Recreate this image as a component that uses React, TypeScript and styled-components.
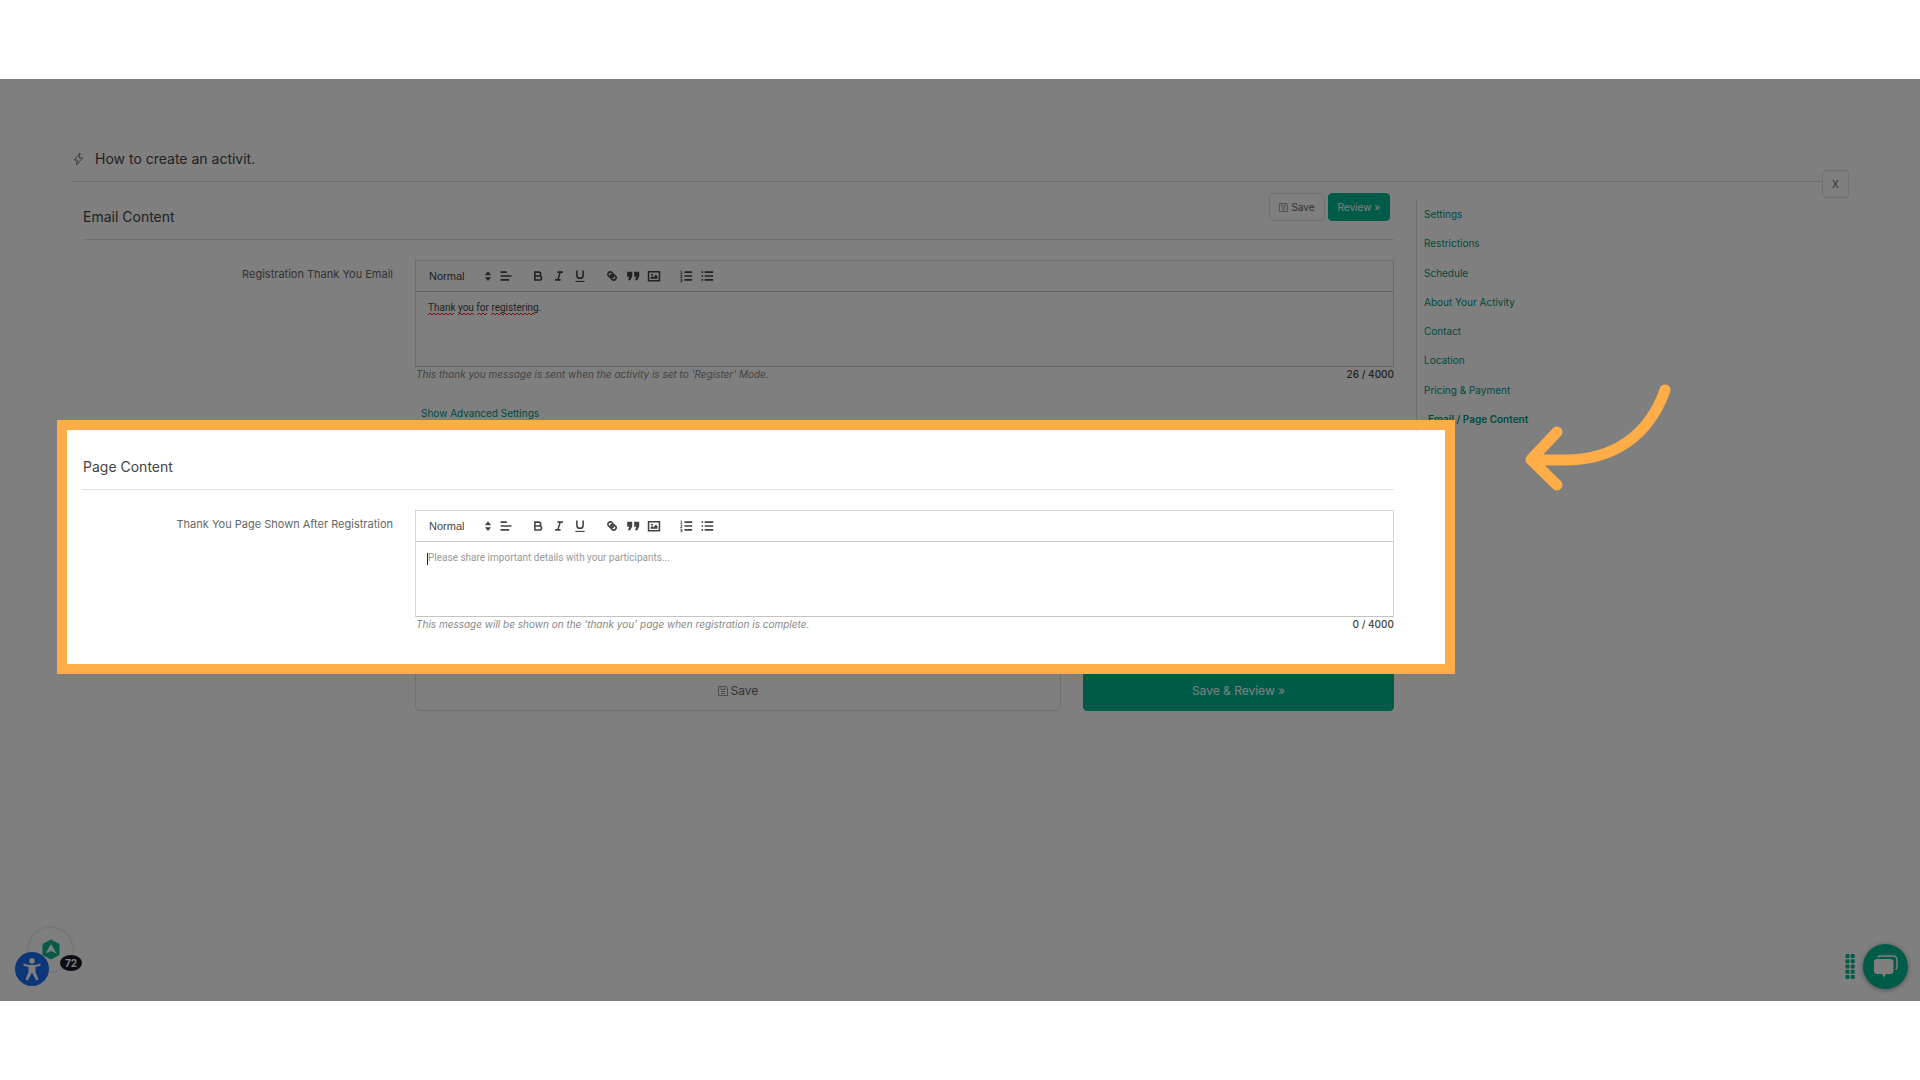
import React, { useId } from "react";
import styled, { createGlobalStyle } from "styled-components";

const green = "#00b892";
const orange = "#ffad48";
const rule = "#e2e2e2";

const GlobalStyle = createGlobalStyle`
  *, *::before, *::after { box-sizing: border-box; }
  body {
    margin: 0;
    background: #fff;
    color: #444;
    font: 11px/16px Inter, "Open Sans", sans-serif;
  }
  button, select, textarea { font: inherit; color: inherit; }
`;

const Page = styled.div`
  display: flex;
  flex-direction: column;
  min-height: 100vh;
  padding: 79px 0;
`;

const Stage = styled.div`
  position: relative;
  isolation: isolate;
  flex: 1;
  overflow: hidden;
  padding: 64px 71px;
  background: #fff;
`;

const Header = styled.header`
  display: flex;
  align-items: flex-end;
`;

const TitleBar = styled.div`
  display: flex;
  flex: 1;
  align-items: center;
  gap: 11px;
  height: 39px;
  padding: 0 0 6px 2px;
  margin-bottom: 11px;
  border-bottom: 1px solid #d8d8d8;
  color: #444;
`;

const Title = styled.h1`
  margin: 0;
  font-size: 14px;
  line-height: 20px;
  font-weight: 400;
`;

const Button = styled.button<{ $primary?: boolean; $large?: boolean }>`
  display: flex;
  align-items: center;
  justify-content: center;
  gap: 3px;
  height: ${(p) => (p.$large ? 40 : 28)}px;
  padding: 0 9px;
  border: 1px solid ${(p) => (p.$primary ? green : rule)};
  border-radius: 4px;
  background: ${(p) => (p.$primary ? green : "#fff")};
  color: ${(p) => (p.$primary ? "#fff" : "#666")};
  font-size: ${(p) => (p.$large ? 12 : 10)}px;
`;

const CloseButton = styled(Button)`
  width: 27px;
  padding: 0;
  margin-bottom: -5px;
`;

const Body = styled.div`
  display: grid;
  grid-template-columns: minmax(0, 1fr) 433px;
  gap: 22px;
  align-items: start;
  padding-left: 11px;
`;

const Section = styled.section`
  position: relative;
`;

const SectionHead = styled.div`
  display: flex;
  align-items: flex-start;
  justify-content: space-between;
  height: 47px;
  padding-right: 4px;
  border-bottom: 1px solid ${rule};
`;

const SectionTitle = styled.h2`
  margin: 0;
  padding: 14px 0 0 1px;
  font-size: 14px;
  line-height: 20px;
  font-weight: 400;
`;

const Actions = styled.div`
  display: flex;
  gap: 3px;
`;

const FieldRow = styled.div`
  display: grid;
  grid-template-columns: 311px minmax(0, 1fr);
  column-gap: 22px;
  margin-top: 20px;
`;

const FieldLabel = styled.label`
  padding-top: 6px;
  color: #666;
  text-align: right;
`;

const EditorBox = styled.div`
  border: 1px solid #d6d6d6;
  border-bottom-color: #c4c4c4;
`;

const Toolbar = styled.div`
  display: flex;
  align-items: center;
  gap: 11px;
  height: 31px;
  padding-left: 6px;
  border-bottom: 1px solid #c8c8c8;
`;

const ToolGroup = styled.div`
  display: flex;
  align-items: center;
`;

const ToolButton = styled.button`
  display: grid;
  place-items: center;
  width: 21px;
  height: 18px;
  padding: 0;
  border: 0;
  background: none;
  color: #444;
`;

const Picker = styled.div`
  display: grid;
  align-items: center;
  width: 73px;
  > * { grid-area: 1 / 1; }
  > svg { justify-self: end; pointer-events: none; }
`;

const PickerSelect = styled.select`
  appearance: none;
  padding: 0 7px;
  border: 0;
  background: none;
  font: 500 11px/16px "Liberation Sans", Arial, sans-serif;
`;

const Writing = styled.div`
  position: relative;
  height: 74px;
`;

const TextArea = styled.textarea`
  display: block;
  width: 100%;
  height: 100%;
  padding: 9px 12px;
  border: 0;
  outline: 0;
  resize: none;
  background: none;
  font: 10px/14px Roboto, Arial, sans-serif;
  color: #444;
  &::placeholder { color: #999; opacity: 1; }
`;

const Squiggles = styled.svg`
  position: absolute;
  left: 12px;
  top: 20px;
  pointer-events: none;
`;

const Caret = styled.span`
  position: absolute;
  left: 11px;
  top: 11px;
  width: 1px;
  height: 12px;
  background: #222;
`;

const Notes = styled.div`
  display: flex;
  justify-content: space-between;
  padding-left: 1px;
  font-size: 10px;
  line-height: 14px;
`;

const Hint = styled.em`
  color: #888;
`;

const Counter = styled.strong`
  font-weight: 500;
`;

const TextLink = styled.a<{ $active?: boolean }>`
  color: #00947a;
  font-size: 10px;
  font-weight: ${(p) => (p.$active ? 600 : 400)};
  padding-left: ${(p) => (p.$active ? 4 : 0)}px;
  text-decoration: none;
`;

const Advanced = styled.div`
  padding: 24px 0 22px 339px;
`;

const Spotlight = styled.div`
  position: absolute;
  z-index: 2;
  inset: -23px -61px -43px -25px;
  border: 10px solid ${orange};
  box-shadow: 0 0 0 4000px rgba(0, 0, 0, 0.5);
  pointer-events: none;
`;

const Submit = styled.div`
  display: grid;
  grid-template-columns: 27fr 13fr;
  gap: 22px;
  margin: 40px 0 0 333px;
`;

const Nav = styled.nav`
  position: relative;
  margin-top: 8px;
  border-left: 1px solid #d8d8d8;
`;

const NavList = styled.ul`
  display: flex;
  flex-direction: column;
  justify-content: space-between;
  height: 230px;
  margin: 0;
  padding: 5px 0 4px 7px;
  list-style: none;
`;

const Arrow = styled.svg`
  position: absolute;
  z-index: 3;
  left: 103px;
  top: 179px;
`;

const Badges = styled.div`
  position: absolute;
  left: 15px;
  bottom: 14px;
  width: 70px;
  height: 62px;
`;

const Launcher = styled.button`
  position: absolute;
  left: 14px;
  top: 3px;
  display: grid;
  place-items: center;
  width: 43px;
  height: 43px;
  padding: 0;
  border: 0;
  border-radius: 50%;
  background: #fff;
  box-shadow: 0 0 4px rgba(0, 0, 0, 0.2);
`;

const Access = styled.button`
  position: absolute;
  left: 0;
  bottom: 1px;
  width: 34px;
  height: 34px;
  padding: 0;
  border: 0;
  border-radius: 50%;
  background: #1a6cf0;
`;

const Count = styled.span`
  position: absolute;
  left: 45px;
  top: 30px;
  width: 22px;
  height: 16px;
  border-radius: 50%;
  background: #141b2d;
  color: #fff;
  font-size: 10px;
  font-weight: 700;
  text-align: center;
`;

const ChatDock = styled.div`
  position: absolute;
  right: 12px;
  bottom: 12px;
  display: flex;
  align-items: center;
  gap: 8px;
`;

const ChatButton = styled.button`
  display: grid;
  place-items: center;
  width: 45px;
  height: 45px;
  padding: 0;
  border: 0;
  border-radius: 50%;
  background: ${green};
  box-shadow: 0 1px 5px rgba(0, 0, 0, 0.4);
`;

const BoltIcon = () => (
  <svg width="11" height="14" viewBox="0 0 11 14" fill="none" stroke="#777" strokeWidth="1" strokeLinejoin="round" aria-hidden="true">
    <path d="M7 1 1.200 8h3.300L3.400 13l6.200-7H6.200z" />
  </svg>
);

const DiskIcon = ({ size }: { size: number }) => (
  <svg width={size} height={size} viewBox="0 0 10 10" fill="none" stroke="#999" aria-hidden="true">
    <path d="M.5.5h8l1 1v8h-9zM3 .5v3h4v-3M3 7.5h4M3 5.5h4" />
  </svg>
);

const tools: Record<string, React.ReactNode> = {
  align: <path d="M2 9h14M2 14h11M2 4h8" />,
  bold: <path d="M5 4h5a2.5 2.5 0 0 1 0 5H5zM5 9h6a2.5 2.5 0 0 1 0 5.2H5z" />,
  italic: <path d="M7 4h7M4 14h7M10.500 4l-3 10" />,
  underline: (
    <>
      <path d="M5 2v6a4 4 0 0 0 8 0V2" />
      <path d="M3 16h12" strokeWidth="1.4" />
    </>
  ),
  link: (
    <>
      <path d="m7 7 4 4" />
      <path d="M8.9 4.600A2.900 2.900 0 1 0 4.600 8.900l1.300 1.200a2.900 2.900 0 0 0 4.200-4.200zM9.100 13.400a2.900 2.900 0 1 0 4.300-4.300l-1.300-1.200a2.900 2.900 0 0 0-4.200 4.200z" />
    </>
  ),
  quote: (
    <path
      d="M1.500 3.500h6.500v6L5.500 14.500H2.500L4.200 10H1.500zM10.500 3.500H17v6l-2.500 5h-3L13.200 10h-2.700z"
      fill="currentColor"
      stroke="none"
    />
  ),
  image: (
    <>
      <path d="M2 3.500h14v11.500H2z" />
      <circle cx="6.500" cy="7.500" r="1.300" fill="currentColor" stroke="none" />
      <path d="M4.500 12.500v-1.500l2-2 2 1.500 3-3.500 2 2.500v3z" fill="currentColor" stroke="none" />
    </>
  ),
  ordered: (
    <>
      <path d="M7 4h10M7 9h10M7 14h10" />
      <path d="M2 2.500h1V6M2 6h2.500M1.800 8h2v1.500l-2 1.500h2.400M1.800 13h2v3.500h-2M2 14.700h1.800" strokeWidth="1" />
    </>
  ),
  bullet: <path d="M6 4h11M6 9h11M6 14h11M2 4h2M2 9h2M2 14h2" />,
};

const Tool = ({ name }: { name: string }) => (
  <ToolButton type="button" aria-label={name}>
    <svg width="14" height="14" viewBox="0 0 18 18" fill="none" stroke="currentColor" strokeWidth="2" aria-hidden="true">
      {tools[name]}
    </svg>
  </ToolButton>
);

const zigzag = (from: number, to: number) => {
  let d = `M${from} 3`;
  for (let x = from + 2, up = true; x <= to; x += 2, up = !up) d += `L${x} ${up ? 1 : 3}`;
  return d;
};

interface EditorProps {
  label: string;
  hint: string;
  count: string;
  text?: string;
  placeholder?: string;
}

const Editor = ({ label, hint, count, text, placeholder }: EditorProps) => {
  const id = useId();
  return (
    <FieldRow>
      <FieldLabel htmlFor={id}>{label}</FieldLabel>
      <div>
        <EditorBox>
          <Toolbar>
            <ToolGroup>
              <Picker>
                <PickerSelect aria-label="Text style">
                  <option>Normal</option>
                </PickerSelect>
                <svg width="14" height="14" viewBox="0 0 18 18" fill="#444" aria-hidden="true">
                  <path d="M5 8h8L9 3zM5 10.500h8l-4 5z" />
                </svg>
              </Picker>
              <Tool name="align" />
            </ToolGroup>
            <ToolGroup>
              <Tool name="bold" />
              <Tool name="italic" />
              <Tool name="underline" />
            </ToolGroup>
            <ToolGroup>
              <Tool name="link" />
              <Tool name="quote" />
              <Tool name="image" />
            </ToolGroup>
            <ToolGroup>
              <Tool name="ordered" />
              <Tool name="bullet" />
            </ToolGroup>
          </Toolbar>
          <Writing>
            <TextArea id={id} defaultValue={text} placeholder={placeholder} spellCheck={false} />
            {text ? (
              <Squiggles width="112" height="4" fill="none" stroke="#e22" aria-hidden="true">
                <path d={zigzag(0, 27) + zigzag(30, 46) + zigzag(49, 60) + zigzag(63, 108)} />
              </Squiggles>
            ) : (
              <Caret />
            )}
          </Writing>
        </EditorBox>
        <Notes>
          <Hint>{hint}</Hint>
          <Counter>{count}</Counter>
        </Notes>
      </div>
    </FieldRow>
  );
};

const links = [
  "Settings",
  "Restrictions",
  "Schedule",
  "About Your Activity",
  "Contact",
  "Location",
  "Pricing & Payment",
  "Email / Page Content",
];

export default function App() {
  return (
    <Page>
      <GlobalStyle />
      <Stage>
        <Header>
          <TitleBar>
            <BoltIcon />
            <Title>How to create an activit.</Title>
          </TitleBar>
          <CloseButton type="button">X</CloseButton>
        </Header>
        <Body>
          <main>
            <Section>
              <SectionHead>
                <SectionTitle>Email Content</SectionTitle>
                <Actions>
                  <Button type="button">
                    <DiskIcon size={9} />
                    Save
                  </Button>
                  <Button type="button" $primary>
                    Review »
                  </Button>
                </Actions>
              </SectionHead>
              <Editor
                label="Registration Thank You Email"
                text="Thank you for registering."
                hint="This thank you message is sent when the activity is set to 'Register' Mode."
                count="26 / 4000"
              />
              <Advanced>
                <TextLink href="#advanced">Show Advanced Settings</TextLink>
              </Advanced>
            </Section>
            <Section>
              <SectionHead>
                <SectionTitle>Page Content</SectionTitle>
              </SectionHead>
              <Editor
                label="Thank You Page Shown After Registration"
                placeholder="Please share important details with your participants..."
                hint="This message will be shown on the ‘thank you’ page when registration is complete."
                count="0 / 4000"
              />
              <Spotlight />
            </Section>
            <Submit>
              <Button type="button" $large>
                <DiskIcon size={10} />
                Save
              </Button>
              <Button type="button" $large $primary>
                Save &amp; Review »
              </Button>
            </Submit>
          </main>
          <Nav>
            <NavList>
              {links.map((name, i) => (
                <li key={name}>
                  <TextLink href={"#section-" + i} $active={i === links.length - 1}>
                    {name}
                  </TextLink>
                </li>
              ))}
            </NavList>
            <Arrow width="152" height="112" viewBox="0 0 152 112" fill="none" stroke={orange} strokeWidth="11" strokeLinecap="round" strokeLinejoin="round" aria-hidden="true">
              <path d="M145 10C129 56 93 80 45 80Q28 80 11 79.500M37 52 11 79.500 37 105" />
            </Arrow>
          </Nav>
        </Body>
        <Badges>
          <Launcher type="button" aria-label="Open tips">
            <svg width="18" height="21" viewBox="0 0 18 21" aria-hidden="true">
              <path d="M9 .5 17.500 5v11L9 20.500.5 16V5z" fill="#10b58c" />
              <path d="M9 5l5.500 9.500L9 12l-5.500 2.500z" fill="#fff" />
            </svg>
          </Launcher>
          <Access type="button" aria-label="Accessibility">
            <svg width="34" height="34" viewBox="0 0 34 34" fill="#fff" aria-hidden="true">
              <circle cx="17" cy="9" r="2.800" />
              <path d="M8.500 11.500q8.500 3 17 0v2.300L20.500 15v5l3 7.500-2.300.8L17 20.500l-4.200 7.800-2.300-.8 3-7.500v-5l-5-1.200z" />
            </svg>
          </Access>
          <Count>72</Count>
        </Badges>
        <ChatDock>
          <svg width="10" height="25" viewBox="0 0 10 25" fill={green} aria-hidden="true">
            {[0, 1, 2, 3, 4].map((r) => (
              <g key={r}>
                <rect x="0.500" y={r * 5.25} width="4" height="4" rx="1" />
                <rect x="5.700" y={r * 5.25} width="4" height="4" rx="1" />
              </g>
            ))}
          </svg>
          <ChatButton type="button" aria-label="Chat">
            <svg width="25" height="24" viewBox="0 0 25 24" aria-hidden="true">
              <path d="M5 2.500Q5 1 7 1h13q4 0 4 4v7q0 2-1.500 2.500" fill="none" stroke="#fff" strokeWidth="1.500" />
              <path d="M4 4h13q3.500 0 3.500 3v9q0 3-3.500 3h-4l-2 3.500L9 19H4q-3 0-3-3V7q0-3 3-3z" fill="#fff" />
            </svg>
          </ChatButton>
        </ChatDock>
      </Stage>
    </Page>
  );
}
